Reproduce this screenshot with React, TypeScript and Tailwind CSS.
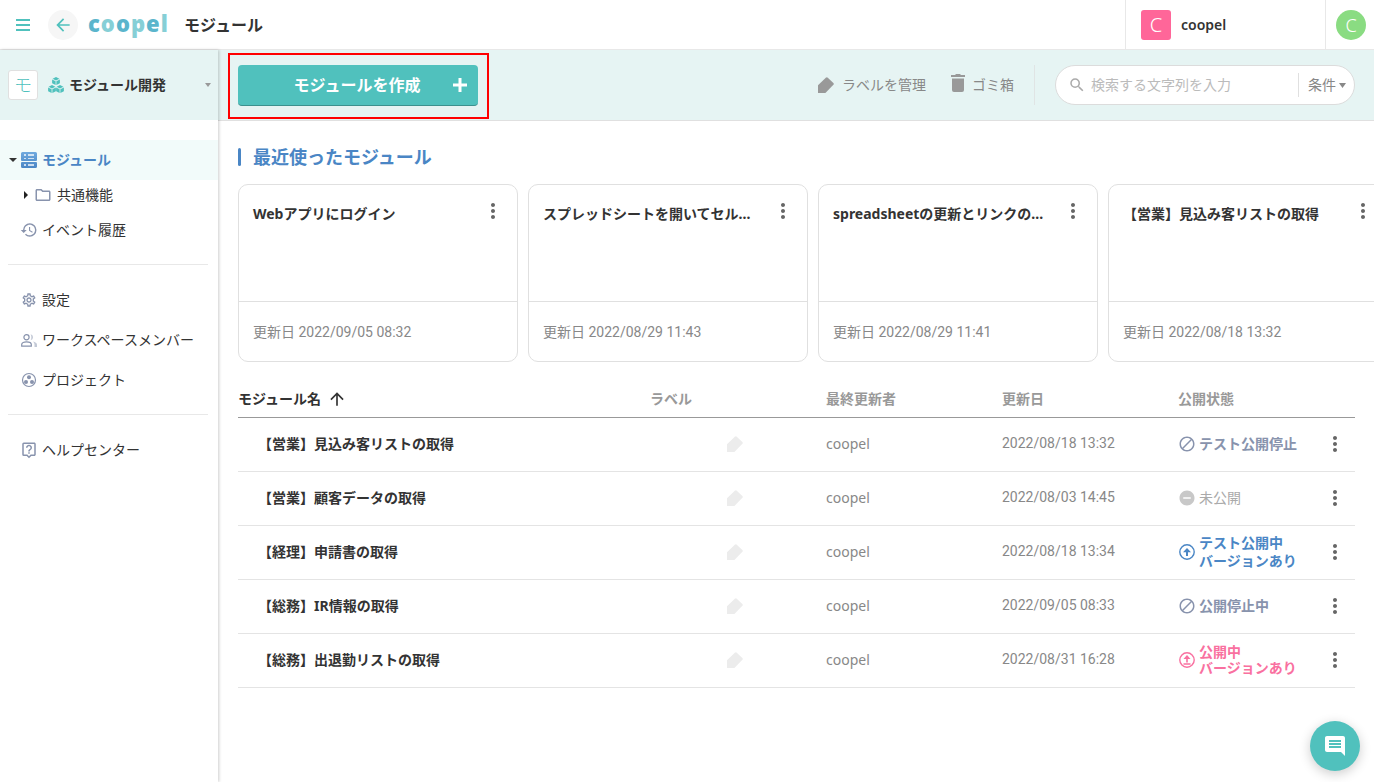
import type { ReactNode } from 'react';
import {
  MdArrowBack,
  MdArrowUpward,
  MdBlock,
  MdComment,
  MdDoNotDisturbOn,
  MdHistory,
  MdMoreVert,
  MdOutlineFolder,
  MdOutlineLiveHelp,
  MdOutlineSettings,
  MdSearch,
} from 'react-icons/md';

type Status = 'testStopped' | 'draft' | 'testLive' | 'stopped' | 'live';

const recentModules = [
  { title: 'Webアプリにログイン', date: '2022/09/05 08:32' },
  { title: 'スプレッドシートを開いてセル...', date: '2022/08/29 11:43' },
  { title: 'spreadsheetの更新とリンクの...', date: '2022/08/29 11:41' },
  { title: '【営業】見込み客リストの取得', date: '2022/08/18 13:32' },
];

const modules: { name: string; user: string; date: string; status: Status }[] = [
  { name: '【営業】見込み客リストの取得', user: 'coopel', date: '2022/08/18 13:32', status: 'testStopped' },
  { name: '【営業】顧客データの取得', user: 'coopel', date: '2022/08/03 14:45', status: 'draft' },
  { name: '【経理】申請書の取得', user: 'coopel', date: '2022/08/18 13:34', status: 'testLive' },
  { name: '【総務】IR情報の取得', user: 'coopel', date: '2022/09/05 08:33', status: 'stopped' },
  { name: '【総務】出退勤リストの取得', user: 'coopel', date: '2022/08/31 16:28', status: 'live' },
];

function TagIcon({ className }: { className: string }) {
  return (
    <svg viewBox="0 0 16 16" className={className} fill="currentColor" aria-hidden="true">
      <path d="M0 16V8.3L7.8.7Q8.8-.1 9.8.7L15.4 6Q16.2 6.900 15.4 7.800L7.400 16Z" />
    </svg>
  );
}

function TrashIcon() {
  return (
    <svg viewBox="0 0 14 18" className="h-[18px] w-3.5" fill="currentColor" aria-hidden="true">
      <path d="M0 1h4l1-1h4l1 1h4v2H0zM1 4.500h12V16a2 2 0 0 1-2 2H3a2 2 0 0 1-2-2z" />
    </svg>
  );
}

function CubesIcon() {
  const cubes = [
    [8, 4],
    [4, 12],
    [12, 12],
  ];
  return (
    <svg viewBox="0 0 16 16" className="size-4 text-[#50c1bd]" fill="currentColor" aria-hidden="true">
      {cubes.map(([x, y]) => (
        <g key={`${x}-${y}`} transform={`translate(${x} ${y})`}>
          <path d="M0-4L3.400-2.300L0-.6L-3.400-2.300Z" />
          <path d="M-3.900-1.600L-.4.200V4L-3.900 2.200Z" />
          <path d="M3.900-1.600L.4.200V4L3.900 2.200Z" />
        </g>
      ))}
    </svg>
  );
}

function ServerIcon() {
  return (
    <svg viewBox="0 0 16 16" className="size-4" aria-hidden="true">
      <defs>
        <linearGradient id="server" x1="0" y1="0" x2="0" y2="1">
          <stop offset="0" stopColor="#6fa9de" />
          <stop offset="1" stopColor="#4a86c5" />
        </linearGradient>
      </defs>
      <path
        fill="url(#server)"
        d="M1.500 0h13A1.500 1.500 0 0 1 16 1.500V8a1 1 0 0 1-1 1H1a1 1 0 0 1-1-1V1.500A1.500 1.500 0 0 1 1.500 0zM1 10h14a1 1 0 0 1 1 1v3.500a1.500 1.500 0 0 1-1.500 1.500h-13A1.500 1.500 0 0 1 0 14.500V11a1 1 0 0 1 1-1z"
      />
      <path fill="#fff" opacity=".7" d="M3 2h2v2H3zM7 2h6v2H7zM3 6h2v1H3zM7 6h6v1H7zM3 12h2v2H3zM7 12h6v2H7z" />
    </svg>
  );
}

function MembersIcon() {
  return (
    <svg viewBox="0 0 16 13" className="h-[13px] w-4" fill="none" stroke="currentColor" aria-hidden="true">
      <circle cx="5.500" cy="3.200" r="2.600" strokeWidth="1.200" />
      <path d="M.7 12.200v-1.700c0-1.800 2.400-2.700 4.800-2.700s4.800.9 4.800 2.700v1.700z" strokeWidth="1.200" />
      <path
        d="M9.600.3a3 3 0 0 1 0 5.900c1-1.600 1-4.200 0-5.900zM12 7.500c2.200.5 4 1.500 4 3.200V13h-2.500v-2.300c0-1.300-.6-2.400-1.500-3.200z"
        fill="currentColor"
        stroke="none"
        opacity=".5"
      />
    </svg>
  );
}

function ProjectIcon() {
  return (
    <svg viewBox="0 0 16 16" className="size-4" fill="currentColor" aria-hidden="true">
      <circle cx="8" cy="8" r="6.500" fill="none" stroke="currentColor" strokeWidth="1.200" />
      <circle cx="8" cy="5.300" r="2" />
      <circle cx="5" cy="10" r="2" />
      <circle cx="11" cy="10" r="2" />
    </svg>
  );
}

function PublishIcon({ underline }: { underline?: boolean }) {
  return (
    <svg viewBox="0 0 16 16" className="size-4 shrink-0" fill="none" stroke="currentColor" aria-hidden="true">
      <circle cx="8" cy="8" r="7.200" strokeWidth="1.400" />
      {underline ? (
        <>
          <path d="M8 4.500V10.500M4.500 12h7" strokeWidth="1.600" />
          <path d="M8 3l3.500 4h-7z" fill="currentColor" stroke="none" />
        </>
      ) : (
        <>
          <path d="M8 5.500V12" strokeWidth="2" />
          <path d="M8 4l4 4.200H4z" fill="currentColor" stroke="none" />
        </>
      )}
    </svg>
  );
}

function Logo() {
  return (
    <a
      href="#home"
      aria-label="coopel"
      className="ml-2.5 flex w-20 gap-px pb-1 font-['Noto_Sans'] text-[22px] leading-7 font-black text-[#86cfd6]"
    >
      <span className="text-[#5bb5cc]">c</span>
      <span>o</span>
      <span className="text-[#5bb5cc]">o</span>
      <span>p</span>
      <span className="text-[#5bb5cc]">e</span>
      <span>l</span>
    </a>
  );
}

function Caret({ className }: { className: string }) {
  return (
    <svg viewBox="0 0 8 5" className={className} fill="currentColor" preserveAspectRatio="none" aria-hidden="true">
      <path d="M0 0h8L4 5z" />
    </svg>
  );
}

function MenuButton() {
  return (
    <button type="button" aria-label="メニュー" className="flex size-6 items-center justify-center text-[#666]">
      <MdMoreVert className="size-6" />
    </button>
  );
}

function Header() {
  return (
    <header className="flex h-[50px] items-stretch border-b border-[#e8e8e8] bg-white">
      <div className="flex flex-1 items-center pl-4">
        <button type="button" aria-label="サイドバー" className="flex w-3.5 flex-col gap-[3px]">
          <span className="h-0.5 w-full bg-[#50c1bd]" />
          <span className="h-0.5 w-full bg-[#50c1bd]" />
          <span className="h-0.5 w-full bg-[#50c1bd]" />
        </button>
        <button
          type="button"
          aria-label="戻る"
          className="ml-[18px] flex size-[30px] items-center justify-center rounded-full bg-[#f6f6f6] text-[#50c1bd]"
        >
          <MdArrowBack className="size-5" />
        </button>
        <Logo />
        <h1 className="ml-4 text-base font-bold">モジュール</h1>
      </div>
      <div className="flex w-[200px] items-center border-l border-[#e8e8e8] pl-[15px]">
        <span className="flex size-[30px] items-center justify-center rounded-[3px] bg-[#ff6699] text-xl font-light text-white">
          C
        </span>
        <span className="ml-2.5 text-sm font-semibold">coopel</span>
      </div>
      <div className="flex w-[49px] items-center border-l border-[#e8e8e8] pl-2.5">
        <button
          type="button"
          className="flex size-[30px] items-center justify-center rounded-full bg-[#8adc82] text-lg font-light text-white"
        >
          C
        </button>
      </div>
    </header>
  );
}

function NavItem({ icon, children }: { icon: ReactNode; children: ReactNode }) {
  return (
    <a href="#nav" className="flex h-10 items-center pl-5">
      <span className="mr-1 flex w-[18px] items-center justify-center text-[#8893ad]">{icon}</span>
      {children}
    </a>
  );
}

function Sidebar() {
  return (
    <aside className="z-10 w-[218px] shrink-0 bg-white text-sm shadow-[1px_0_3px_rgba(0,0,0,0.2)]">
      <div className="flex h-[70px] items-center bg-[#e6f4f3] pl-2">
        <span className="mr-2.5 flex size-[30px] items-center justify-center rounded-[3px] border border-[#e0e0e0] bg-white text-lg font-light text-[#50c1bd]">
          モ
        </span>
        <CubesIcon />
        <span className="ml-[5px] flex-1 font-bold">モジュール開発</span>
        <Caret className="mr-[7px] h-1 w-1.5 text-[#999]" />
      </div>
      <nav className="pt-5">
        <a href="#modules" className="flex h-10 items-center bg-[#f2fbfa] pl-[9px] font-bold text-[#4a86c5]">
          <Caret className="mr-1 h-1 w-2 text-[#333]" />
          <ServerIcon />
          <span className="ml-[5px]">モジュール</span>
        </a>
        <a href="#common" className="flex h-[30px] items-center pl-6">
          <svg viewBox="0 0 4 8" className="h-2 w-1" aria-hidden="true">
            <path d="M0 0l4 4-4 4z" fill="#222" />
          </svg>
          <MdOutlineFolder className="ml-1.5 size-[18px] text-[#8893ad]" />
          <span className="ml-[5px]">共通機能</span>
        </a>
        <NavItem icon={<MdHistory className="size-[18px]" />}>イベント履歴</NavItem>
        <hr className="mx-2 mt-3.5 mb-[15px] w-[200px] border-[#e8e8e8]" />
        <NavItem icon={<MdOutlineSettings className="size-4" />}>設定</NavItem>
        <NavItem icon={<MembersIcon />}>ワークスペースメンバー</NavItem>
        <NavItem icon={<ProjectIcon />}>プロジェクト</NavItem>
        <hr className="mx-2 mt-3.5 mb-[15px] w-[200px] border-[#e8e8e8]" />
        <NavItem icon={<MdOutlineLiveHelp className="size-[18px]" />}>ヘルプセンター</NavItem>
      </nav>
    </aside>
  );
}

function Toolbar() {
  return (
    <div className="flex h-[71px] items-center border-b border-[#e0e0e0] bg-[#e6f4f3] pr-[19px] pl-5 text-sm text-[#888]">
      <div className="relative">
        <button
          type="button"
          className="flex h-[41px] w-60 items-center rounded border-b border-[#3c918e] bg-[#50c1bd] pr-2.5 text-base font-bold text-white"
        >
          <span className="flex-1 pl-6 text-center">モジュールを作成</span>
          <svg viewBox="0 0 16 16" className="size-4" aria-hidden="true">
            <path d="M6.500 1h3v5.500H15v3H9.500V15h-3V9.500H1v-3h5.500z" fill="#fff" />
          </svg>
        </button>
        <div className="pointer-events-none absolute -top-3 -right-[11px] -bottom-[13px] -left-2.5 border-2 border-[#f00]" />
      </div>
      <button type="button" className="ml-auto flex items-center gap-2">
        <TagIcon className="size-4 text-[#999]" />
        ラベルを管理
      </button>
      <button type="button" className="ml-[25px] flex items-center gap-[7px]">
        <span className="pb-1 text-[#999]">
          <TrashIcon />
        </span>
        ゴミ箱
      </button>
      <div className="ml-5 h-10 w-px bg-[#e0e4e4]" />
      <form className="ml-5 flex h-10 w-[300px] items-center rounded-full border border-[#dcdcdc] bg-white pr-2 pl-3">
        <MdSearch className="size-[18px] text-[#aaa]" />
        <input
          type="text"
          aria-label="検索"
          placeholder="検索する文字列を入力"
          className="ml-[5px] min-w-0 flex-1 outline-none placeholder:text-[#bbb]"
        />
        <div className="h-6 w-px bg-[#e0e0e0]" />
        <button type="button" className="ml-[9px] flex items-center gap-[3px]">
          条件
          <Caret className="h-[5px] w-[7px] text-[#888]" />
        </button>
      </form>
    </div>
  );
}

function StatusLabel({ status }: { status: Status }) {
  switch (status) {
    case 'testStopped':
    case 'stopped':
      return (
        <div className="flex items-center gap-[3px] font-bold text-[#8893ad]">
          <MdBlock className="size-[18px] shrink-0" />
          {status === 'stopped' ? '公開停止中' : 'テスト公開停止'}
        </div>
      );
    case 'draft':
      return (
        <div className="flex items-center gap-[3px] text-[#aaa]">
          <MdDoNotDisturbOn className="size-[18px] shrink-0 text-[#c8c8c8]" />
          未公開
        </div>
      );
    case 'testLive':
      return (
        <div className="flex items-center gap-1 pl-px leading-[18px] font-bold text-[#4a86c5]">
          <PublishIcon />
          <span>
            テスト公開中
            <br />
            バージョンあり
          </span>
        </div>
      );
    case 'live':
      return (
        <div className="flex items-center gap-1 pl-px leading-4 font-bold text-[#f970a0]">
          <PublishIcon underline />
          <div>
            <div>公開中</div>
            <div>バージョンあり</div>
          </div>
        </div>
      );
  }
}

function ModuleTable() {
  return (
    <table className="mt-[19px] w-full table-fixed text-left text-sm">
      <thead>
        <tr className="h-9 border-b border-[#999] text-[#999] *:font-bold">
          <th className="text-[#333]">
            <button type="button" className="flex items-center gap-1.5">
              モジュール名
              <MdArrowUpward className="size-5" />
            </button>
          </th>
          <th className="w-44">ラベル</th>
          <th className="w-44">最終更新者</th>
          <th className="w-44">更新日</th>
          <th className="w-[133px]">公開状態</th>
          <th className="w-11" aria-label="操作" />
        </tr>
      </thead>
      <tbody>
        {modules.map((m) => (
          <tr key={m.name} className="h-[54px] border-b border-[#e4e4e4] text-[#888]">
            <td className="pl-5 font-bold text-[#333]">{m.name}</td>
            <td className="pl-[77px]">
              <TagIcon className="size-4 text-[#ececec]" />
            </td>
            <td>{m.user}</td>
            <td className="pb-0.5 font-[Roboto]">{m.date}</td>
            <td>
              <StatusLabel status={m.status} />
            </td>
            <td className="pl-3">
              <MenuButton />
            </td>
          </tr>
        ))}
      </tbody>
    </table>
  );
}

export default function App() {
  return (
    <div className="flex min-h-screen flex-col bg-white font-['Noto_Sans','Noto_Sans_CJK_JP',sans-serif] text-[#333]">
      <Header />
      <div className="flex flex-1">
        <Sidebar />
        <main className="min-w-0 flex-1 overflow-hidden">
          <Toolbar />
          <div className="pt-[22px] pr-[19px] pl-5">
            <h2 className="flex h-7 items-center text-lg font-bold text-[#4a86c5]">
              <span className="mr-3 h-[18px] w-[3px] rounded-sm bg-[#4a86c5]" />
              最近使ったモジュール
            </h2>
            <div className="mt-[13px] flex gap-2.5">
              {recentModules.map((m) => (
                <article
                  key={m.title}
                  className="flex h-[178px] w-[280px] shrink-0 flex-col rounded-[10px] border border-[#e0e0e0]"
                >
                  <div className="flex flex-1 items-start justify-between pt-3.5 pr-3 pl-3.5">
                    <h3 className="pt-[5px] text-sm font-bold whitespace-nowrap">{m.title}</h3>
                    <MenuButton />
                  </div>
                  <div className="flex h-[60px] items-center border-t border-[#e0e0e0] pl-3.5 font-[Roboto,'Noto_Sans_CJK_JP',sans-serif] text-sm text-[#888]">
                    更新日 {m.date}
                  </div>
                </article>
              ))}
            </div>
            <ModuleTable />
          </div>
        </main>
      </div>
      <button
        type="button"
        aria-label="チャット"
        className="fixed right-3.5 bottom-[11px] z-20 flex size-[50px] items-center justify-center rounded-full bg-[#50c1bd] text-white shadow-[0_3px_12px_rgba(0,0,0,0.2)]"
      >
        <MdComment className="size-6" />
      </button>
    </div>
  );
}
